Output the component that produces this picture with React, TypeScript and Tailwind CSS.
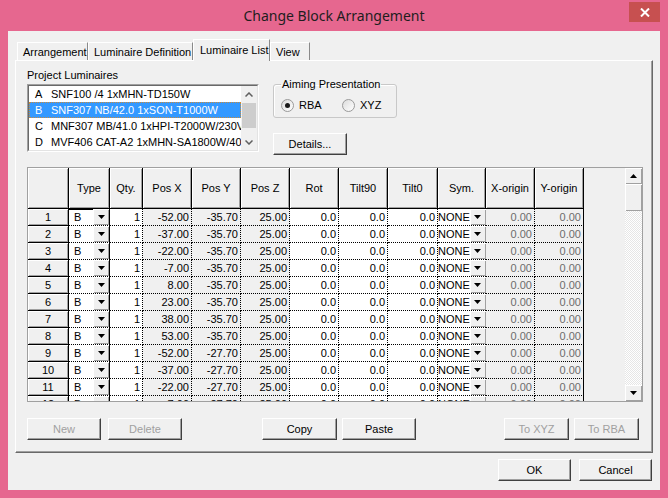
import type { ReactNode } from 'react';

const raised = 'bg-[#f0f0f0] shadow-[inset_1px_1px_0_#ffffff,inset_-1px_-1px_0_#a0a0a0]';

const luminaires = [
  { id: 'A', name: 'SNF100 /4 1xMHN-TD150W' },
  { id: 'B', name: 'SNF307 NB/42.0 1xSON-T1000W' },
  { id: 'C', name: 'MNF307 MB/41.0 1xHPI-T2000W/230V' },
  { id: 'D', name: 'MVF406 CAT-A2 1xMHN-SA1800W/400V' },
];

const positions: [number, number][] = [
  [-52, -35.7],
  [-37, -35.7],
  [-22, -35.7],
  [-7, -35.7],
  [8, -35.7],
  [23, -35.7],
  [38, -35.7],
  [53, -35.7],
  [-52, -27.7],
  [-37, -27.7],
  [-22, -27.7],
  [-7, -27.7],
];

const headers = [
  { label: 'Type', w: 'w-[41px]' },
  { label: 'Qty.', w: 'w-[33px]' },
  { label: 'Pos X', w: 'w-[49px]' },
  { label: 'Pos Y', w: 'w-[49px]' },
  { label: 'Pos Z', w: 'w-[49px]' },
  { label: 'Rot', w: 'w-[49px]' },
  { label: 'Tilt90', w: 'w-[49px]' },
  { label: 'Tilt0', w: 'w-[50px]' },
  { label: 'Sym.', w: 'w-[48px]' },
  { label: 'X-origin', w: 'w-[49px]' },
  { label: 'Y-origin', w: 'w-[49px]' },
];

function Button({ label, w, disabled }: { label: string; w: string; disabled?: boolean }) {
  return (
    <button
      type="button"
      className={`${w} h-[22px] shrink-0 bg-[#f0f0f0] border border-t-white border-l-white border-r-[#404040] border-b-[#404040] shadow-[inset_-1px_-1px_0_#a0a0a0] ${disabled ? 'text-[#a0a0a0]' : 'text-black'}`}
    >
      {label}
    </button>
  );
}

function Tab({ label, w, active }: { label: string; w: string; active?: boolean }) {
  return (
    <div
      className={`${w} shrink-0 whitespace-nowrap bg-[#f0f0f0] border-t border-l border-r border-t-white border-l-white border-r-[#8a8a8a] ${active ? 'h-[22px] pt-[3px] pl-[6px]' : 'h-[18px] mb-px pt-[2px] pl-[5px]'}`}
    >
      {label}
    </div>
  );
}

function Radio({ label, checked, w }: { label: string; checked?: boolean; w?: string }) {
  return (
    <div className={`flex items-center ${w ?? ''}`}>
      <span className="w-[13px] h-[13px] rounded-full border border-[#9a9a9a] bg-gradient-to-br from-[#dcdcdc] to-white flex items-center justify-center">
        {checked && <span className="w-[5px] h-[5px] rounded-full bg-[#1a1a1a]" />}
      </span>
      <span className="ml-[5px]">{label}</span>
    </div>
  );
}

function Arrow({ up }: { up?: boolean }) {
  return (
    <svg width="7" height="4" viewBox="0 0 7 4">
      <path d={up ? 'M3.5 0L7 4H0z' : 'M0 0h7L3.5 4z'} fill="#000" />
    </svg>
  );
}

function Chevron({ up }: { up?: boolean }) {
  return (
    <svg width="8" height="5" viewBox="0 0 8 5">
      <path d={up ? 'M0.5 4.5L4 1l3.5 3.5' : 'M0.5 0.5L4 4l3.5-3.5'} fill="none" stroke="#606060" strokeWidth="1.5" />
    </svg>
  );
}

function Dropdown() {
  return (
    <div className={`w-[16px] h-full shrink-0 ${raised} flex items-center justify-center`}>
      <Arrow />
    </div>
  );
}

function Cell({
  w,
  gray,
  solid,
  dim,
  children,
}: {
  w: string;
  gray?: boolean;
  solid?: boolean;
  dim?: boolean;
  children: ReactNode;
}) {
  return (
    <div
      className={`${w} shrink-0 h-full border-r border-b border-black [border-bottom-style:dotted] ${solid ? '' : '[border-right-style:dotted]'} ${gray ? 'bg-[#f0f0f0]' : 'bg-white'} ${dim ? 'text-[#6d6d6d]' : ''} flex items-center justify-end pr-[2px]`}
    >
      {children}
    </div>
  );
}

function DataRow({ n, x, y }: { n: number; x: number; y: number }) {
  const focus = n === 1;
  return (
    <div className="flex h-[17px] shrink-0">
      <div className={`w-[41px] shrink-0 h-full border-r border-b border-black ${raised} flex items-center justify-center`}>
        {n}
      </div>
      <div
        className={`w-[41px] shrink-0 h-full flex border-r border-b border-black [border-bottom-style:dotted] bg-white ${focus ? 'shadow-[inset_0_1px_0_#000]' : ''}`}
      >
        <div className="flex-1 pl-[5px] flex items-center">B</div>
        <Dropdown />
      </div>
      <Cell w="w-[33px]">1</Cell>
      <Cell w="w-[49px]" gray>{x.toFixed(2)}</Cell>
      <Cell w="w-[49px]" gray>{y.toFixed(2)}</Cell>
      <Cell w="w-[49px]" gray>25.00</Cell>
      <Cell w="w-[49px]">0.0</Cell>
      <Cell w="w-[49px]">0.0</Cell>
      <Cell w="w-[50px]">0.0</Cell>
      <div className="w-[48px] shrink-0 h-full flex border-r border-b border-black [border-bottom-style:dotted] bg-white">
        <div className="flex-1 flex items-center">NONE</div>
        <Dropdown />
      </div>
      <Cell w="w-[49px]" gray dim>0.00</Cell>
      <Cell w="w-[49px]" gray dim solid>0.00</Cell>
    </div>
  );
}

export default function App() {
  return (
    <div className="w-[668px] h-[498px] bg-[#e6678f] flex flex-col font-['Liberation_Sans',Arial,sans-serif] text-[11px] leading-[14px] text-black">
      <div className="h-[31px] flex shrink-0">
        <div className="w-[39px] shrink-0" />
        <div className="flex-1 flex items-center justify-center font-['Noto_Sans',sans-serif] text-[14px] text-[#1e1e1e]">
          Change Block Arrangement
        </div>
        <div className="w-[31px] h-[20px] mt-[2px] mr-[8px] bg-[#c75050] flex items-center justify-center">
          <svg width="10" height="9" viewBox="0 0 10 9">
            <path d="M1 0.5l8 8M9 0.5l-8 8" stroke="#fff" strokeWidth="2" />
          </svg>
        </div>
      </div>

      <div className="mx-[8px] mb-[8px] flex-1 bg-[#f0f0f0] px-[7px] flex flex-col">
        <div className="mt-[7px] h-[23px] -mb-px flex items-end pl-[2px] relative z-10">
          <Tab label="Arrangement" w="w-[71px]" />
          <Tab label="Luminaire Definition" w="w-[105px]" />
          <Tab label="Luminaire List" w="w-[77px]" active />
          <Tab label="View" w="w-[40px]" />
        </div>

        <div className="border border-t-white border-l-white border-r-[#696969] border-b-[#696969] shadow-[inset_-1px_-1px_0_#a0a0a0] pl-[11px] pr-[9px] pt-[7px] pb-[12px]">
          <div className="flex">
            <div className="w-[232px] shrink-0">
              <div className="h-[14px]">Project Luminaires</div>
              <div className="mt-[2px] h-[68px] border border-t-[#a0a0a0] border-l-[#a0a0a0] border-r-white border-b-white">
                <div className="h-full flex border border-t-[#696969] border-l-[#696969] border-r-[#e3e3e3] border-b-[#e3e3e3] bg-white">
                  <div className="w-[212px] shrink-0 overflow-hidden">
                    {luminaires.map((l) => (
                      <div
                        key={l.id}
                        className={`h-[16px] flex items-center whitespace-nowrap ${l.id === 'B' ? 'bg-[#3399ff] text-white border border-dotted border-[#c98a3a]' : ''}`}
                      >
                        <span className={`${l.id === 'B' ? 'w-[21px] pl-[5px]' : 'w-[22px] pl-[6px]'} shrink-0`}>{l.id}</span>
                        <span>{l.name}</span>
                      </div>
                    ))}
                  </div>
                  <div className="flex-1 flex flex-col bg-[#f0f0f0]">
                    <div className="h-[16px] flex items-center justify-center">
                      <Chevron up />
                    </div>
                    <div className="h-[25px] mt-px mx-px bg-[#cdcdcd]" />
                    <div className="flex-1" />
                    <div className="h-[16px] flex items-center justify-center">
                      <Chevron />
                    </div>
                  </div>
                </div>
              </div>
            </div>

            <div className="ml-[14px] pt-[9px]">
              <fieldset className="w-[124px] border border-[#c8c8c8] rounded-[3px] shadow-[inset_1px_1px_0_#fff]">
                <legend className="ml-[7px] px-[1px] leading-[14px]">Aiming Presentation</legend>
                <div className="flex items-center h-[14px] mt-[7px] mb-[5px] pl-[7px]">
                  <Radio label="RBA" checked w="w-[61px]" />
                  <Radio label="XYZ" />
                </div>
              </fieldset>
              <div className="mt-[15px]">
                <Button label="Details..." w="w-[74px]" />
              </div>
            </div>
          </div>

          <div className="mt-[12px] w-[616px] h-[235px] border border-[#a0a0a0] flex bg-[#f0f0f0]">
            <div className="w-[597px] shrink-0 overflow-hidden flex flex-col">
              <div className="flex h-[41px] shrink-0">
                <div className={`w-[41px] shrink-0 h-full border-r border-b border-black ${raised}`} />
                {headers.map((h) => (
                  <div
                    key={h.label}
                    className={`${h.w} shrink-0 h-full border-r border-b border-black ${raised} flex items-center justify-center`}
                  >
                    {h.label}
                  </div>
                ))}
              </div>
              {positions.map(([x, y], i) => (
                <DataRow key={i} n={i + 1} x={x} y={y} />
              ))}
            </div>
            <div className="w-[17px] shrink-0 flex flex-col">
              <div className={`h-[16px] shrink-0 ${raised} flex items-center justify-center`}>
                <Arrow up />
              </div>
              <div className={`h-[27px] shrink-0 ${raised}`} />
              <div className="flex-1 bg-[repeating-conic-gradient(#ffffff_0_25%,#e6e6e6_0_50%)] bg-[length:2px_2px]" />
              <div className={`h-[16px] shrink-0 ${raised} flex items-center justify-center`}>
                <Arrow />
              </div>
            </div>
          </div>

          <div className="mt-[16px] flex">
            <Button label="New" w="w-[74px]" disabled />
            <div className="ml-[7px]">
              <Button label="Delete" w="w-[74px]" disabled />
            </div>
            <div className="ml-[80px]">
              <Button label="Copy" w="w-[75px]" />
            </div>
            <div className="ml-[5px]">
              <Button label="Paste" w="w-[74px]" />
            </div>
            <div className="ml-[88px]">
              <Button label="To XYZ" w="w-[65px]" disabled />
            </div>
            <div className="ml-[5px]">
              <Button label="To RBA" w="w-[65px]" disabled />
            </div>
          </div>
        </div>

        <div className="mt-[6px] flex justify-end gap-[8px] pr-px">
          <Button label="OK" w="w-[73px]" />
          <Button label="Cancel" w="w-[73px]" />
        </div>
      </div>
    </div>
  );
}
